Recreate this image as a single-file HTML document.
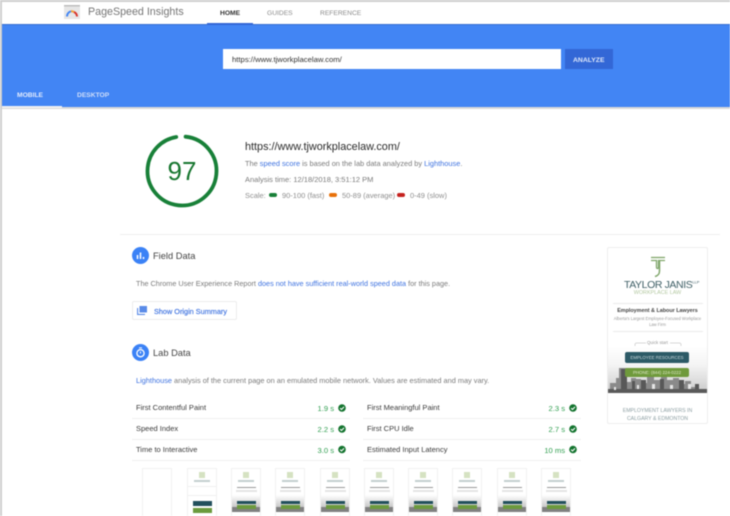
<!DOCTYPE html>
<html>
<head>
<meta charset="utf-8">
<style>
html,body{margin:0;padding:0;background:#fff}
body{width:730px;height:516px;overflow:hidden;position:relative;font-family:"Liberation Sans",sans-serif}
#w{position:absolute;left:0;top:0;width:730px;height:516px;overflow:hidden;filter:blur(.5px)}
.a,.t{position:absolute}
.t{white-space:nowrap;line-height:1}
.l{color:#3f73e0}
.g{color:#7b7b7b}
.th{position:absolute;top:468px;width:30px;height:60px;background:#fff;border:1px solid #f1f1f1;box-sizing:border-box;overflow:hidden}
.th i{position:absolute;display:block}
.row{position:absolute;height:1px;background:#f0f0f0}
.m{font-size:7.5px;color:#3a3a3a}
.v{font-size:7.6px;color:#2f9e4f;text-align:right}
</style>
</head>
<body>
<div id="w">
<div class="a" style="left:0;top:0;width:730px;height:2px;background:#cfcfcf"></div>

<svg class="a" style="left:64px;top:5px" width="16" height="14" viewBox="0 0 16 14">
<rect width="16" height="14" fill="#e6e6e6"/><rect width="16" height="1.5" fill="#bdbdbd"/>
<path d="M3 11.5A5.2 5.2 0 0 1 7 6.3" fill="none" stroke="#4285f4" stroke-width="2"/>
<path d="M7 6.3A5.2 5.2 0 0 1 10 7" fill="none" stroke="#f4a030" stroke-width="2"/>
<path d="M10 7A5.2 5.2 0 0 1 13 11.5" fill="none" stroke="#d9342b" stroke-width="2"/>
</svg>
<div class="t" style="left:88px;top:7px;font-size:10.7px;color:#757575">PageSpeed Insights</div>
<div class="t" style="left:220px;top:10.500px;font-size:6.7px;font-weight:bold;color:#333">HOME</div>
<div class="t" style="left:267px;top:10.500px;font-size:6.7px;color:#8b8b8b">GUIDES</div>
<div class="t" style="left:320px;top:10.500px;font-size:6.7px;color:#8b8b8b">REFERENCE</div>

<div class="a" style="left:2px;top:24px;width:728px;height:83px;background:#4285f4"></div>
<div class="a" style="left:2px;top:24px;width:728px;height:1px;background:#3a6fd0"></div>
<div class="a" style="left:207px;top:23px;width:46px;height:2px;background:#3367d6"></div>
<div class="a" style="left:2px;top:107px;width:728px;height:2px;background:#d9d9d9"></div>
<div class="a" style="left:223px;top:49px;width:338px;height:20px;background:#fff"></div>
<div class="t" style="left:232px;top:56px;font-size:7.7px;color:#333">https://www.tjworkplacelaw.com/</div>
<div class="a" style="left:565px;top:49px;width:48px;height:20px;background:#3367d6"></div>
<div class="t" style="left:573px;top:57.500px;font-size:6.8px;font-weight:bold;color:#dfe8fb">ANALYZE</div>
<div class="t" style="left:17px;top:92.500px;font-size:6.7px;font-weight:bold;color:#e3ecfd">MOBILE</div>
<div class="t" style="left:77px;top:92.500px;font-size:6.7px;font-weight:bold;color:#d0def9">DESKTOP</div>
<div class="a" style="left:2px;top:106px;width:60px;height:2px;background:#f1f1f1"></div>
<div class="a" style="left:0;top:0;width:2px;height:516px;background:#cfcfcf"></div>

<svg class="a" style="left:142px;top:131px" width="80" height="80" viewBox="0 0 80 80">
<circle cx="40" cy="40" r="34.5" fill="none" stroke="#188038" stroke-width="3.8" stroke-linecap="round" stroke-dasharray="207 217" transform="rotate(-84 40 40)"/>
</svg>
<div class="t" style="left:142px;top:157.500px;width:80px;text-align:center;font-size:26px;color:#17762f">97</div>

<div class="t" style="left:245px;top:141.500px;font-size:10.85px;color:#2a2a2a">https://www.tjworkplacelaw.com/</div>
<div class="t g" style="left:245px;top:160px;font-size:7.4px">The <span class="l">speed score</span> is based on the lab data analyzed by <span class="l">Lighthouse</span>.</div>
<div class="t g" style="left:245px;top:176px;font-size:7.5px">Analysis time: 12/18/2018, 3:51:12 PM</div>
<div class="t g" style="left:245px;top:192px;font-size:7.47px;color:#8f8f8f">Scale:</div>
<div class="a" style="left:269px;top:193px;width:8px;height:4px;border-radius:2px;background:#188038"></div>
<div class="t g" style="left:282px;top:192px;font-size:7.47px;color:#8f8f8f">90-100 (fast)</div>
<div class="a" style="left:329px;top:193px;width:8px;height:4px;border-radius:2px;background:#e8710a"></div>
<div class="t g" style="left:342px;top:192px;font-size:7.47px;color:#8f8f8f">50-89 (average)</div>
<div class="a" style="left:397px;top:193px;width:8px;height:4px;border-radius:2px;background:#c5221f"></div>
<div class="t g" style="left:410px;top:192px;font-size:7.47px;color:#8f8f8f">0-49 (slow)</div>

<div class="a" style="left:120px;top:234px;width:600px;height:1px;background:#eeeeee"></div>

<svg class="a" style="left:132px;top:247px" width="17" height="17" viewBox="0 0 17 17">
<circle cx="8.5" cy="8.5" r="8.5" fill="#3b82f6"/>
<path d="M5.5 8v4M8.5 5.5V12M11.500 10v2" stroke="#fff" stroke-width="1.5"/>
</svg>
<div class="t" style="left:153px;top:251.500px;font-size:9.3px;color:#444">Field Data</div>
<div class="t g" style="left:136px;top:280px;font-size:7.27px">The Chrome User Experience Report <span class="l">does not have sufficient real-world speed data</span> for this page.</div>
<div class="a" style="left:132px;top:301px;width:105px;height:19px;border:1px solid #ececec;border-radius:2px;box-sizing:border-box;background:#fff"></div>
<svg class="a" style="left:137px;top:306px" width="10" height="9" viewBox="0 0 10 9">
<rect x="2.5" y="0" width="7.5" height="6.5" fill="#5a8be8"/>
<path d="M.6 2v6.400H8" fill="none" stroke="#5a8be8" stroke-width="1.1"/>
</svg>
<div class="t" style="left:154px;top:308px;font-size:7.3px;color:#3f73e0;-webkit-text-stroke:.15px #3f73e0">Show Origin Summary</div>

<svg class="a" style="left:132px;top:344px" width="17" height="17" viewBox="0 0 17 17">
<circle cx="8.5" cy="8.5" r="8.5" fill="#3b82f6"/>
<circle cx="8.5" cy="9.2" r="3.6" fill="none" stroke="#fff" stroke-width="1.3"/>
<path d="M7 3.900h3M8.500 7.500v2" stroke="#fff" stroke-width="1"/>
</svg>
<div class="t" style="left:153px;top:348.500px;font-size:9.3px;color:#444">Lab Data</div>
<div class="t g" style="left:136px;top:377px;font-size:7.37px"><span class="l">Lighthouse</span> analysis of the current page on an emulated mobile network. Values are estimated and may vary.</div>

<div class="t m" style="left:136px;top:404px">First Contentful Paint</div>
<div class="t v" style="left:280px;top:405px;width:54px">1.9 s</div>
<div class="row" style="left:132px;top:418px;width:218px"></div>
<div class="t m" style="left:136px;top:425px">Speed Index</div>
<div class="t v" style="left:280px;top:426px;width:54px">2.2 s</div>
<div class="row" style="left:132px;top:439px;width:218px"></div>
<div class="t m" style="left:136px;top:445.500px">Time to Interactive</div>
<div class="t v" style="left:280px;top:446.500px;width:54px">3.0 s</div>
<div class="row" style="left:132px;top:460px;width:218px"></div>

<div class="t m" style="left:367px;top:404px">First Meaningful Paint</div>
<div class="t v" style="left:511px;top:405px;width:54px">2.3 s</div>
<div class="row" style="left:363px;top:418px;width:218px"></div>
<div class="t m" style="left:367px;top:425px">First CPU Idle</div>
<div class="t v" style="left:511px;top:426px;width:54px">2.7 s</div>
<div class="row" style="left:363px;top:439px;width:218px"></div>
<div class="t m" style="left:367px;top:445.500px">Estimated Input Latency</div>
<div class="t v" style="left:511px;top:446.500px;width:54px">10 ms</div>
<div class="row" style="left:363px;top:460px;width:218px"></div>

<svg class="a" style="left:0;top:0" width="730" height="516">
<defs><g id="c"><circle cx="4" cy="4" r="3.8" fill="#14742f"/><path d="M2.100 4.100l1.400 1.400 2.500-2.600" fill="none" stroke="#fff" stroke-width="1.1"/></g></defs>
<use href="#c" x="338" y="404"/><use href="#c" x="338" y="425"/><use href="#c" x="338" y="445.500"/>
<use href="#c" x="569" y="404"/><use href="#c" x="569" y="425"/><use href="#c" x="569" y="445.500"/>
</svg>

<div class="th" style="left:142px"></div>
<div class="th" style="left:187px"><i style="left:11px;top:3px;width:6px;height:6px;background:#d5e2c2"></i><i style="left:6px;top:11px;width:16px;height:1.500px;background:#c3cfcf"></i><i style="left:0;top:17px;width:29px;height:1px;background:#f0f0f0"></i><i style="left:0;top:26px;width:29px;height:1px;background:#f0f0f0"></i><i style="left:5px;top:32px;width:19px;height:5px;background:#22505c"></i><i style="left:5px;top:39px;width:19px;height:5px;background:#6b9a3d"></i></div>
<div class="th" style="left:231px"><i style="left:11px;top:3px;width:6px;height:6px;background:#d5e2c2"></i><i style="left:6px;top:11px;width:16px;height:1.500px;background:#c3cfcf"></i><i style="left:5px;top:18px;width:19px;height:1px;background:#999"></i><i style="left:4px;top:20.500px;width:21px;height:2px;background:#e4e4e4"></i><i style="left:0;top:26px;width:28px;height:13px;background:linear-gradient(#fff,#c4c4c4)"></i><i style="left:0;top:38px;width:28px;height:5px;background:#808080"></i><i style="left:5px;top:31.500px;width:19px;height:3.500px;background:#22505c"></i><i style="left:5px;top:36px;width:19px;height:4px;background:#6b9a3d"></i></div>
<div class="th" style="left:275px"><i style="left:11px;top:3px;width:6px;height:6px;background:#d5e2c2"></i><i style="left:6px;top:11px;width:16px;height:1.500px;background:#c3cfcf"></i><i style="left:5px;top:18px;width:19px;height:1px;background:#999"></i><i style="left:4px;top:20.500px;width:21px;height:2px;background:#e4e4e4"></i><i style="left:0;top:26px;width:28px;height:13px;background:linear-gradient(#fff,#c4c4c4)"></i><i style="left:0;top:38px;width:28px;height:5px;background:#808080"></i><i style="left:5px;top:31.500px;width:19px;height:3.500px;background:#22505c"></i><i style="left:5px;top:36px;width:19px;height:4px;background:#6b9a3d"></i></div>
<div class="th" style="left:320px"><i style="left:11px;top:3px;width:6px;height:6px;background:#d5e2c2"></i><i style="left:6px;top:11px;width:16px;height:1.500px;background:#c3cfcf"></i><i style="left:5px;top:18px;width:19px;height:1px;background:#999"></i><i style="left:4px;top:20.500px;width:21px;height:2px;background:#e4e4e4"></i><i style="left:0;top:26px;width:28px;height:13px;background:linear-gradient(#fff,#c4c4c4)"></i><i style="left:0;top:38px;width:28px;height:5px;background:#808080"></i><i style="left:5px;top:31.500px;width:19px;height:3.500px;background:#22505c"></i><i style="left:5px;top:36px;width:19px;height:4px;background:#6b9a3d"></i></div>
<div class="th" style="left:364px"><i style="left:11px;top:3px;width:6px;height:6px;background:#d5e2c2"></i><i style="left:6px;top:11px;width:16px;height:1.500px;background:#c3cfcf"></i><i style="left:5px;top:18px;width:19px;height:1px;background:#999"></i><i style="left:4px;top:20.500px;width:21px;height:2px;background:#e4e4e4"></i><i style="left:0;top:26px;width:28px;height:13px;background:linear-gradient(#fff,#c4c4c4)"></i><i style="left:0;top:38px;width:28px;height:5px;background:#808080"></i><i style="left:5px;top:31.500px;width:19px;height:3.500px;background:#22505c"></i><i style="left:5px;top:36px;width:19px;height:4px;background:#6b9a3d"></i></div>
<div class="th" style="left:408px"><i style="left:11px;top:3px;width:6px;height:6px;background:#d5e2c2"></i><i style="left:6px;top:11px;width:16px;height:1.500px;background:#c3cfcf"></i><i style="left:5px;top:18px;width:19px;height:1px;background:#999"></i><i style="left:4px;top:20.500px;width:21px;height:2px;background:#e4e4e4"></i><i style="left:0;top:26px;width:28px;height:13px;background:linear-gradient(#fff,#c4c4c4)"></i><i style="left:0;top:38px;width:28px;height:5px;background:#808080"></i><i style="left:5px;top:31.500px;width:19px;height:3.500px;background:#22505c"></i><i style="left:5px;top:36px;width:19px;height:4px;background:#6b9a3d"></i></div>
<div class="th" style="left:452px"><i style="left:11px;top:3px;width:6px;height:6px;background:#d5e2c2"></i><i style="left:6px;top:11px;width:16px;height:1.500px;background:#c3cfcf"></i><i style="left:5px;top:18px;width:19px;height:1px;background:#999"></i><i style="left:4px;top:20.500px;width:21px;height:2px;background:#e4e4e4"></i><i style="left:0;top:26px;width:28px;height:13px;background:linear-gradient(#fff,#c4c4c4)"></i><i style="left:0;top:38px;width:28px;height:5px;background:#808080"></i><i style="left:5px;top:31.500px;width:19px;height:3.500px;background:#22505c"></i><i style="left:5px;top:36px;width:19px;height:4px;background:#6b9a3d"></i></div>
<div class="th" style="left:497px"><i style="left:11px;top:3px;width:6px;height:6px;background:#d5e2c2"></i><i style="left:6px;top:11px;width:16px;height:1.500px;background:#c3cfcf"></i><i style="left:5px;top:18px;width:19px;height:1px;background:#999"></i><i style="left:4px;top:20.500px;width:21px;height:2px;background:#e4e4e4"></i><i style="left:0;top:26px;width:28px;height:13px;background:linear-gradient(#fff,#c4c4c4)"></i><i style="left:0;top:38px;width:28px;height:5px;background:#808080"></i><i style="left:5px;top:31.500px;width:19px;height:3.500px;background:#22505c"></i><i style="left:5px;top:36px;width:19px;height:4px;background:#6b9a3d"></i></div>
<div class="th" style="left:541px"><i style="left:11px;top:3px;width:6px;height:6px;background:#d5e2c2"></i><i style="left:6px;top:11px;width:16px;height:1.500px;background:#c3cfcf"></i><i style="left:5px;top:18px;width:19px;height:1px;background:#999"></i><i style="left:4px;top:20.500px;width:21px;height:2px;background:#e4e4e4"></i><i style="left:0;top:26px;width:28px;height:13px;background:linear-gradient(#fff,#c4c4c4)"></i><i style="left:0;top:38px;width:28px;height:5px;background:#808080"></i><i style="left:5px;top:31.500px;width:19px;height:3.500px;background:#22505c"></i><i style="left:5px;top:36px;width:19px;height:4px;background:#6b9a3d"></i></div>

<div class="a" style="left:607px;top:247px;width:101px;height:177px;border:1px solid #eeeeee;border-radius:2px;box-sizing:border-box;background:#fff"></div>
<svg class="a" style="left:650px;top:256px" width="16" height="22" viewBox="0 0 16 22">
<path d="M1 1.500h14" fill="none" stroke="#7fa66a" stroke-width="1.300"/>
<path d="M1 4.500h5.500V11c0 2 2 2 2 0V4.500H15" fill="none" stroke="#7fa66a" stroke-width="1.300"/>
<path d="M9.500 5v10c0 3-2 5-4.500 5.500" fill="none" stroke="#7fa66a" stroke-width="1.500"/>
</svg>
<div class="t" style="left:624px;top:279.500px;font-size:10.5px;letter-spacing:-.4px;color:#3f5f66">TAYLOR JANIS<sup style="font-size:4px;letter-spacing:0">LLP</sup></div>
<div class="t" style="left:608px;top:290.500px;width:99px;text-align:center;font-size:5.4px;color:#b3c8a0">WORKPLACE LAW</div>
<div class="a" style="left:613px;top:303px;width:90px;height:1px;background:#eaeaea"></div>
<div class="t" style="left:608px;top:308.500px;width:99px;text-align:center;font-size:5.4px;font-weight:bold;color:#444">Employment &amp; Labour Lawyers</div>
<div class="t" style="left:608px;top:316.500px;width:99px;text-align:center;font-size:4.100px;color:#999">Alberta's Largest Employee-Focused Workplace</div>
<div class="t" style="left:608px;top:323px;width:99px;text-align:center;font-size:4.100px;color:#999">Law Firm</div>
<div class="a" style="left:613px;top:331px;width:90px;height:1px;background:#eaeaea"></div>
<div class="t" style="left:608px;top:340.500px;width:99px;text-align:center;font-size:4.400px;color:#999">Quick start</div>
<svg class="a" style="left:634px;top:341px" width="48" height="6" viewBox="0 0 48 6"><path d="M1 5V3.500Q1 2 3 2H12M36 2H45Q47 2 47 3.500V5" fill="none" stroke="#ccc" stroke-width=".8"/></svg>
<div class="a" style="left:608px;top:346px;width:99px;height:47px;background:linear-gradient(#fff,#f4f4f4 40%,#dcdcdc 75%,#c8c8c8)"></div>
<svg class="a" style="left:608px;top:365px" width="99" height="28" viewBox="0 0 99 28">
<path d="M2 28V18h6v-5h3v-10h8v14h4v-4h5v1h5v4h6v-6h7v3h7v-4h6v4h6v-2h6v6h6v-3h6v6h6v3h9v6H0z" fill="#8a8a8a"/>
<path d="M13 4h6v20h-6zM33 15h5v10h-5zM52 14h4v12h-4zM71 15h5v10h-5zM87 19h4v7h-4zM24 16h3v9h-3z" fill="#585858"/>
<path d="M0 24h99v4H0z" fill="#5a5a5a"/>
<path d="M6 22h2v3H6zM29 20h2v4h-2zM44 19h3v5h-3zM62 20h3v4h-3zM80 19h3v5h-3z" fill="#e6e6e6"/>
</svg>
<div class="a" style="left:625px;top:352px;width:64px;height:11px;border-radius:2px;background:#2c5a66"></div>
<div class="t" style="left:625px;top:355.500px;width:64px;text-align:center;font-size:4.400px;color:#c9d8dc">EMPLOYEE RESOURCES</div>
<div class="a" style="left:625px;top:368px;width:64px;height:9px;border-radius:2px;background:#6f9a3c"></div>
<div class="t" style="left:625px;top:370.500px;width:64px;text-align:center;font-size:4.400px;color:#dfe8c9">PHONE: (844) 224-0222</div>
<div class="t" style="left:608px;top:408.500px;width:99px;text-align:center;font-size:5.200px;color:#8d9fa3">EMPLOYMENT LAWYERS IN</div>
<div class="t" style="left:608px;top:416.500px;width:99px;text-align:center;font-size:5.200px;color:#8d9fa3">CALGARY &amp; EDMONTON</div>
</div>
</body>
</html>
